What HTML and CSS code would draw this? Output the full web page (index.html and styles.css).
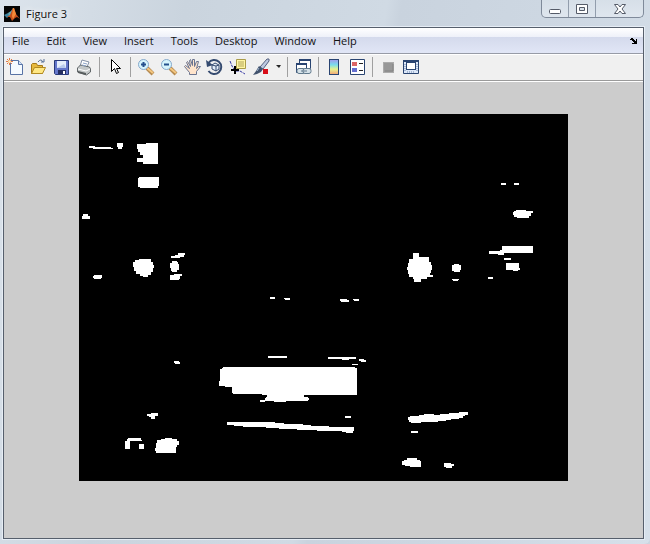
FILE: index.html
```
<!DOCTYPE html>
<html lang="en">
<head>
<meta charset="utf-8">
<title>Figure 3</title>
<link rel="stylesheet" href="styles.css">
</head>
<body>
<div class="window">
  <header class="titlebar">
    <svg class="logo" viewBox="0 0 16 16" aria-hidden="true">
      <rect width="16" height="16" fill="#050505"/>
      <path d="M0 9l4-2 2 2-3 3z" fill="#3d83a0"/>
      <path d="M4 7l3-2 2-3-1 6-2 3-1-1z" fill="#67a9b5"/>
      <path d="M3 11l3-2 3-7 1 0 2 6 4 5-3-2-2 1-3 3-2-4z" fill="#c64f1c"/>
      <path d="M9 2h1l2 6-3 5-1-3z" fill="#f58a38"/>
    </svg>
    <h1 class="title">Figure 3</h1>
    <div class="controls">
      <button class="control" aria-label="Minimize"><svg viewBox="0 0 14 12"><rect x="1.500" y="6.500" width="11" height="4" rx="1" fill="#fff" stroke="#555b68"/></svg></button>
      <button class="control" aria-label="Maximize"><svg viewBox="0 0 14 12"><path d="M1.500 1.500h11v9h-11zM4.500 4.500v3h5v-3z" fill="#fff" fill-rule="evenodd" stroke="#555b68"/></svg></button>
      <button class="control close" aria-label="Close"><svg viewBox="0 0 14 12"><path d="M1.500 1.500h3.500l2 2.500 2-2.500h3.500l-3.500 4.500 3.500 4.500h-3.500l-2-2.500-2 2.500h-3.500l3.500-4.500z" fill="#fff" stroke="#555b68"/></svg></button>
    </div>
  </header>
  <main class="app">
    <nav class="menubar">
      <button class="menu">File</button>
      <button class="menu">Edit</button>
      <button class="menu">View</button>
      <button class="menu">Insert</button>
      <button class="menu">Tools</button>
      <button class="menu">Desktop</button>
      <button class="menu">Window</button>
      <button class="menu">Help</button>
      <button class="dock" aria-label="Dock figure"><svg viewBox="0 0 8 6"><path d="M0 1h1v-1h2v1h1v1h1v1h1v-2h1v5h-5v-1h2v-1h-1v-1h-1v-1h-2z" fill="#000"/></svg></button>
    </nav>
    <div class="toolbar" role="toolbar" aria-label="Figure tools">
      <button class="tool" aria-label="New figure"><svg viewBox="0 0 18 18"><path d="M4.500 2.500h8l4 4v10h-12z" fill="#f5faff" stroke="#5873a5"/><path d="M12.500 2.500v4h4" fill="#d2e2f8" stroke="#5873a5"/><path d="M3.500 0v7M0 3.500h7M1 1l5 5M6 1l-5 5" stroke="#e07a49"/><circle cx="3.500" cy="3.500" r="1.500" fill="#ffe6b0"/></svg></button>
      <button class="tool" aria-label="Open file"><svg viewBox="0 0 18 18"><path d="M2.500 15.500v-9l1-1h4l1 2h5v8z" fill="#e7b93e" stroke="#a57918"/><path d="M2.500 15.500l3-6h11l-3 6z" fill="#ffe783" stroke="#b28a23"/><path d="M9 4q3-4 5 0M12 4h3v-3" fill="none" stroke="#566f95"/></svg></button>
      <button class="tool" aria-label="Save figure"><svg viewBox="0 0 18 18"><path d="M2.500 2.500h14v14h-13l-1-1z" fill="#6577cb" stroke="#293979"/><rect x="5" y="3" width="9" height="7" fill="#e4edfb"/><path d="M5 10h9l-2-4z" fill="#b8caec"/><rect x="6" y="12" width="8" height="4" fill="#252e61"/><rect x="11" y="13" width="2" height="3" fill="#fff"/></svg></button>
      <button class="tool" aria-label="Print figure"><svg viewBox="0 0 18 18"><path d="M5 8l2-6 7 2-2 5z" fill="#fff" stroke="#8491a7"/><path d="M2.500 10l3-3 9 2 1 2v3l-4 3-9-3z" fill="#c3c7c8" stroke="#62686a"/><path d="M3 11l8 2 4-2" fill="none" stroke="#fff"/><path d="M3 13l8 2v2l-8-2z" fill="#575c5d"/><path d="M7 7l4 1M8 5l4 1" stroke="#8ca3c7"/></svg></button>
      <span class="separator"></span>
      <button class="tool" aria-label="Edit plot"><svg viewBox="0 0 18 18"><path d="M5.500 1.500v12l3-3 2 5 2-1-2-4h4z" fill="#fff" stroke="#000"/></svg></button>
      <span class="separator"></span>
      <button class="tool" aria-label="Zoom in"><svg viewBox="0 0 18 18"><path d="M10 10l6 6" stroke="#b58a50" stroke-width="4"/><path d="M10 10l6 5" stroke="#f4c780" stroke-width="2"/><circle cx="6.500" cy="6.500" r="5" fill="#d6f4fc" stroke="#86a9cc"/><path d="M4 6.500h5M6.500 4v5" stroke="#24508d" stroke-width="2"/></svg></button>
      <button class="tool" aria-label="Zoom out"><svg viewBox="0 0 18 18"><path d="M10 10l6 6" stroke="#b58a50" stroke-width="4"/><path d="M10 10l6 5" stroke="#f4c780" stroke-width="2"/><circle cx="6.500" cy="6.500" r="5" fill="#d6f4fc" stroke="#86a9cc"/><path d="M4 6.500h5" stroke="#24508d" stroke-width="2"/></svg></button>
      <button class="tool" aria-label="Pan"><svg viewBox="0 0 18 18"><path d="M6.500 16.500v-2l-5-6 1-1 4 3-3-6 1-1 3 5-1-6 1-1 2 6v-6h2l0 7 2-5h2l-2 7 2-2 2 0-4 5v3z" fill="#ffe4cb" stroke="#6b7490"/></svg></button>
      <button class="tool" aria-label="Rotate 3D"><svg viewBox="0 0 18 18"><path d="M2.500 5a7 7 0 1 1 0 8" fill="none" stroke="#354b70" stroke-width="2"/><path d="M0 2l1 7 6-2z" fill="#354b70"/><path d="M6 7l3-2 4 2v4l-3 2-4-2zM6 7l4 1 3-1M10 8v5" fill="#e3edf8" stroke="#354b70"/></svg></button>
      <button class="tool" aria-label="Data cursor"><svg viewBox="0 0 18 18"><path d="M1 3l2 5 3 5 5 0 5 3" fill="none" stroke="#3537a4" stroke-dasharray="3 1"/><path d="M7.500 1.500h9v9h-9z" fill="#fff6a3" stroke="#aa9c49"/><path d="M9 4h6M9 6h6M9 8h6" stroke="#b3a55b"/><path d="M2 12h8M6 8v8" stroke="#000" stroke-width="2"/></svg></button>
      <button class="tool" aria-label="Brush data"><svg viewBox="0 0 18 18"><path d="M8 9l7-8 2 0 0 2-6 8z" fill="#bdc9e1" stroke="#55617f"/><path d="M7 8l4 3-2 3-4 2-4 1 3-4z" fill="#41526d"/><path d="M5 13l2-3" stroke="#a2b6cf"/><rect x="11" y="11" width="5" height="5" fill="#d80d18"/></svg></button>
      <button class="caret" aria-label="Brush options"><svg viewBox="0 0 5 3"><path d="M0 0h5l-2 3z" fill="#252525"/></svg></button>
      <span class="separator"></span>
      <button class="tool" aria-label="Link plot"><svg viewBox="0 0 18 18"><path d="M5.500 1.500h11v9h-11z" fill="#fff" stroke="#294471"/><path d="M2.500 5.500h10v9h-10z" fill="#fff" stroke="#294471"/><path d="M5 2h12M2 6h11" stroke="#294471" stroke-width="2"/><rect x="3" y="10.500" width="8" height="5" rx="2" fill="#d6e2e9" stroke="#60798c"/><rect x="9" y="10.500" width="8" height="5" rx="2" fill="#d6e2e9" stroke="#60798c"/><path d="M7 13h6" stroke="#60798c"/></svg></button>
      <span class="separator"></span>
      <button class="tool" aria-label="Insert colorbar"><svg viewBox="0 0 18 18"><defs><linearGradient id="spectrum" x2="0" y2="1"><stop stop-color="#a397ec"/><stop offset=".35" stop-color="#79dded"/><stop offset=".65" stop-color="#e8f28d"/><stop offset="1" stop-color="#f3a477"/></linearGradient></defs><rect x="4.500" y="1.500" width="9" height="15" fill="url(#spectrum)" stroke="#294471"/></svg></button>
      <button class="tool" aria-label="Insert legend"><svg viewBox="0 0 18 18"><path d="M2.500 1.500h14v15h-14z" fill="#fff" stroke="#294471"/><rect x="4" y="4" width="5" height="4" fill="#dc6565"/><rect x="4" y="10" width="5" height="4" fill="#656fd0"/><path d="M11 5.500h4M11 12.500h4" stroke="#222"/></svg></button>
      <span class="separator"></span>
      <button class="tool" aria-label="Hide plot tools"><svg viewBox="0 0 18 18"><rect x="4.500" y="4.500" width="10" height="10" fill="#989898" stroke="#ababab"/><path d="M6 13h8V6" fill="none" stroke="#858585"/></svg></button>
      <button class="tool" aria-label="Show plot tools"><svg viewBox="0 0 18 18"><path d="M1.500 2.500h15v13h-15z" fill="#dce8f9" stroke="#294471"/><path d="M1 3h16" stroke="#294471" stroke-width="2"/><rect x="4.500" y="4.500" width="9" height="7" fill="#fff" stroke="#294471"/><path d="M3 6v8M15 6v8M5 14h8" stroke="#6e83a8" stroke-dasharray="1 1"/></svg></button>
    </div>
    <section class="figure">
      <svg class="plot" viewBox="79 114 489 367" role="img" aria-label="Binary image" shape-rendering="crispEdges">
        <rect x="79" y="114" width="489" height="367" fill="#000"/>
        <g fill="#fff">
          <path d="M89 146h6v1h16v1h2v1h-20v-1h-4z"/>
          <path d="M117 143h6v4h-1v2h-4v-2h-1z"/>
          <path d="M137 144h9v-1h12v21h-15v-2h-6v-4h6v-3h-3v-3h-2v-3h-1z"/>
          <path d="M138 178h1v-1h20v9h-1v2h-18v-1h-2z"/>
          <path d="M82 216h1v-2h5v2h2v3h-8z"/>
          <path d="M133 262h2v-2h4v-1h12v3h2v3h1v3h-1v4h-2v3h-3v2h-5v-1h-3v-2h-4v-3h-2v-4h-1z"/>
          <path d="M93 276h1v-1h8v3h-1v1h-7v-1h-1z"/>
          <path d="M171 256h4v-1h3v-2h7v2h-1v2h-4v1h-9z"/>
          <path d="M170 263h2v-2h5v1h1v2h1v6h-2v2h-5v-1h-1v-3h-1z"/>
          <path d="M170 275h4v-1h8v2h-2v3h-1v1h-9z"/>
          <path d="M501 183h5v2h-5zM514 183h5v2h-5z"/>
          <path d="M513 212h1v-1h2v-1h10v1h7v2h-2v3h-2v2h-12v-1h-3v-2h-1z"/>
          <path d="M502 246h31v7h-29v2h-6v-1h-9v-3h11v-1h2z"/>
          <path d="M504 258h7v2h-7zM506 263h13v5h1v2h-2v1h-5v-1h-7zM488 277h5v2h-5z"/>
          <path d="M452 265h2v-1h5v1h2v5h-1v2h-6v-1h-2zM452 279h7v1h-1v1h-5v-1h-1z"/>
          <path d="M413 253h6v4h10v5h2v3h1v5h-1v3h-1v2h3v2h-6v2h-6v3h-7v-3h-1v-2h-4v-3h-1v-4h-1v-3h1v-4h1v-4h4z"/>
          <path d="M270 297h5v2h-5zM284 298h6v2h-5v-1h-1zM340 299h7v1h2v2h-8v-1h-1zM353 299h6v2h-5v-1h-1z"/>
          <path d="M268 356h19v2h-19zM328 357h28v2h-7v1h-7v-1h-14zM359 359h5v1h2v2h-5v-1h-2zM352 364h6v1h-6z"/>
          <path d="M174 361h5v1h1v2h-5v-1h-1z"/>
          <path d="M223 367h132v1h2v27h-53v2h4v1h1v2h-1v1h-22v1h-12v-1h-9v1h-5v-2h5v-2h1v-1h1v-2h-5v-1h-29v-1h-1v-6h-7v-1h-6v-5h1v-12h2v-1h1z"/>
          <path d="M345 416h6v2h-6zM227 422h48v1h9v1h19v1h8v1h18v1h25v4h-1v2h-7v-1h-4v-1h-25v-1h-20v-1h-18v-1h-13v-1h-23v-1h-9v-1h-7z"/>
          <path d="M147 414h4v-1h7v3h-3v3h-4v-2h-2v-1h-2z"/>
          <path d="M125 441h2v-2h1v-1h13v2h1v1h-12v8h-5zM139 444h5v5h-5z"/>
          <path d="M157 440h4v-1h4v-1h7v1h5v2h2v4h-2v2h-1v6h-20v-2h-1v-3h1v-5h1z"/>
          <path d="M408 417h2v-1h9v-1h5v-1h10v1h6v-1h9v-1h10v-1h9v3h-3v1h-2v2h-4v1h-8v1h-5v1h-8v1h-17v1h-10v-1h-2v-2h-1z"/>
          <path d="M411 431h7v2h-7zM402 461h2v-1h3v-2h10v2h3v1h1v6h-11v-1h-5v-1h-3zM444 463h7v1h3v2h-2v2h-6v-1h-2z"/>
        </g>
      </svg>
    </section>
  </main>
</div>
</body>
</html>
```
FILE: styles.css
```
* {
  box-sizing: border-box;
}

body {
  margin: 0;
  font: 11px/16px "Open Sans", "Noto Sans", sans-serif;
  color: #111;
  background: #cbd5e0;
}

button {
  display: flex;
  align-items: center;
  justify-content: center;
  padding: 0;
  border: 0;
  background: none;
  color: inherit;
  font: inherit;
}

.window {
  display: flex;
  flex-direction: column;
  min-height: 100vh;
  padding: 0 6px 5px 3px;
  border-radius: 0 0 6px 0;
  background: linear-gradient(100deg, #dce4ec 0%, #cad4de 25%, #d0dae4 52%, #c9d3de 54%, #ced8e3 78%, #d6e0ea 100%);
}

.titlebar {
  display: flex;
  align-items: center;
  gap: 6px;
  height: 27px;
  padding: 0 0 0 1px;
}

.logo {
  width: 16px;
  height: 16px;
}

.title {
  flex: 1;
  margin: 0;
  font-size: 11px;
  font-weight: 400;
  text-shadow: 0 0 6px #fff, 0 0 8px #fff;
}

.controls {
  display: flex;
  align-self: flex-start;
  height: 18px;
  border: 1px solid #7f8a9a;
  border-top: 0;
  border-radius: 0 0 5px 5px;
  background: linear-gradient(#d6dfe8, #dfe6ee);
}

.control {
  width: 27px;
  border-right: 1px solid #929dac;
}

.control svg {
  width: 14px;
  height: 12px;
}

.close {
  width: 47px;
  border-right: 0;
}

.app {
  display: flex;
  flex: 1;
  flex-direction: column;
  border: 1px solid #565f6c;
  box-shadow: 0 0 0 1px #e6edf5;
}

.menubar {
  display: flex;
  align-items: center;
  gap: 17px;
  height: 26px;
  padding: 0 5px 0 8px;
  border-bottom: 1px solid #979ba6;
  background: linear-gradient(#fff 0, #eef1f9 9px, #d4daec 9px, #e1e6f6 100%);
}

.dock {
  margin-left: auto;
}

.dock svg {
  width: 8px;
  height: 6px;
}

.toolbar {
  display: flex;
  align-items: center;
  height: 28px;
  padding-bottom: 3px;
  border-top: 1px solid #fff;
  border-bottom: 1px solid #fff;
  background: #f0f0f0;
  box-shadow: inset 0 -1px #9a9a9a;
}

.tool {
  justify-content: flex-start;
  width: 23px;
  height: 22px;
  padding-left: 2px;
}

.tool svg {
  width: 18px;
  height: 18px;
}

.caret {
  width: 11px;
  height: 22px;
}

.caret svg {
  width: 5px;
  height: 3px;
}

.separator {
  width: 1px;
  height: 20px;
  margin: 0 4px 0 3px;
  background: #a0a0a0;
}

.figure {
  flex: 1;
  padding: 32px 75px 57px;
  background: #ccc;
}

.plot {
  display: block;
  width: 100%;
  height: auto;
}
```
